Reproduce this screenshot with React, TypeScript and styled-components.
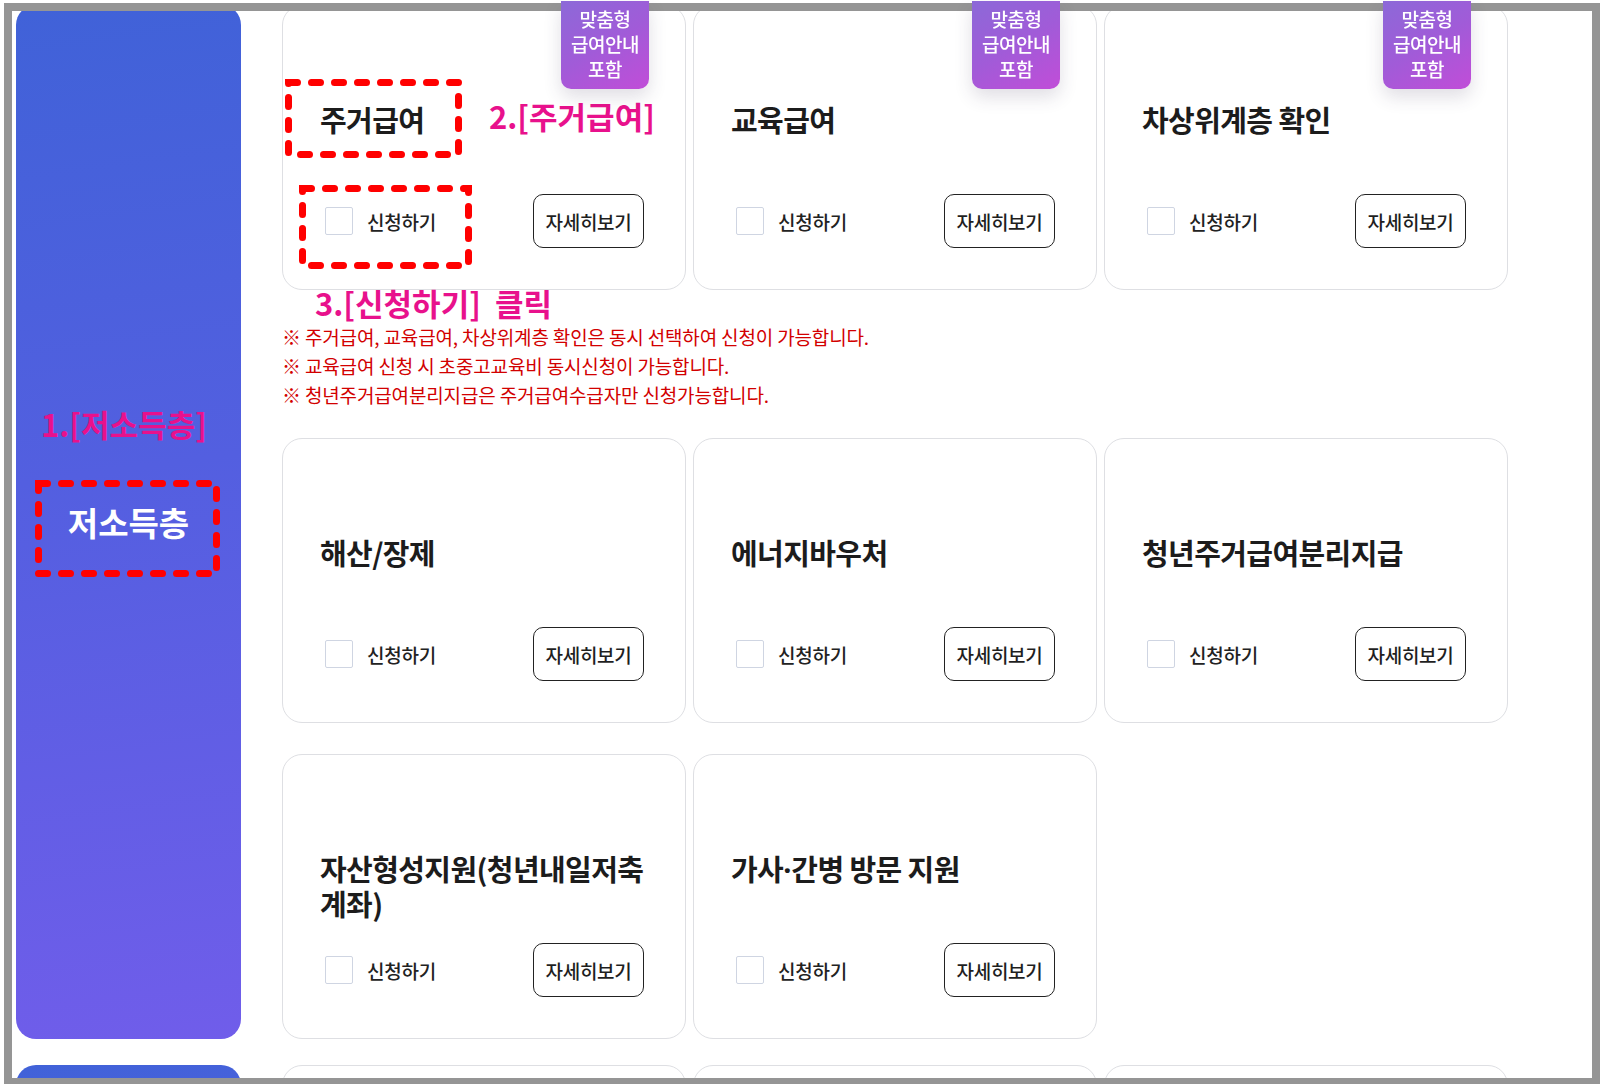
import React from "react";
import styled, { createGlobalStyle } from "styled-components";

const GlobalStyle = createGlobalStyle`
  html, body {
    margin: 0;
    padding: 0;
    background: #ffffff;
    overflow: hidden;
  }
  body {
    font-family: "Noto Sans CJK KR", "Noto Sans", sans-serif;
    color: #1f1f1f;
  }
  * { box-sizing: border-box; }
`;

const Frame = styled.div`
  position: fixed;
  left: 4px;
  top: 3px;
  width: 1596px;
  height: 1083px;
  border: 8px solid #959595;
  pointer-events: none;
  z-index: 50;
`;

const Page = styled.div`
  position: relative;
  padding: 5px 0 0 16px;
  height: 1084px;
  overflow: hidden;
`;

const Section = styled.section`
  display: flex;
  align-items: stretch;
  gap: 41px;
  margin-bottom: 26px;
`;

const Side = styled.div`
  width: 225px;
  flex-shrink: 0;
  border-radius: 20px;
  background: linear-gradient(172deg, #4062d8 0%, #535fe0 45%, #705dea 100%);
  display: flex;
  align-items: center;
  justify-content: center;
  color: #ffffff;
  font-size: 33px;
  font-weight: 700;
  letter-spacing: 0;
`;

const Main = styled.div`
  width: 1226px;
  flex-shrink: 0;
`;

const Grid = styled.div`
  display: grid;
  grid-template-columns: repeat(3, 404px);
  column-gap: 7px;
  row-gap: 31px;
`;

const Card = styled.div`
  position: relative;
  height: 285px;
  border: 1px solid #dedfe3;
  border-radius: 20px;
  background: #ffffff;
  padding: 96px 41px 41px 37px;
  display: flex;
  flex-direction: column;
`;

const Title = styled.h3`
  margin: 0;
  font-size: 29px;
  line-height: 35px;
  font-weight: 700;
  letter-spacing: -0.6px;
  word-break: keep-all;
  color: #1c1c1c;
`;

const Dot = styled.span`
  font-family: "Noto Sans", "DejaVu Sans", sans-serif;
  letter-spacing: 0;
`;

const Footer = styled.div`
  margin-top: auto;
  height: 54px;
  display: flex;
  align-items: center;
  justify-content: space-between;
  padding-left: 5px;
`;

const Check = styled.label`
  display: flex;
  align-items: center;
  gap: 14px;
  font-size: 19px;
  font-weight: 500;
  letter-spacing: -0.2px;
  color: #222222;
  cursor: pointer;
`;

const Box = styled.span`
  width: 28px;
  height: 28px;
  border: 1.5px solid #cfd5e2;
  border-radius: 2px;
  background: #ffffff;
`;

const DetailButton = styled.button`
  width: 111px;
  height: 54px;
  border: 1px solid #222222;
  border-radius: 10px;
  background: #ffffff;
  font-family: inherit;
  font-size: 19px;
  font-weight: 500;
  letter-spacing: -0.3px;
  color: #1f1f1f;
  padding: 0;
  cursor: pointer;
`;

const Badge = styled.div`
  position: absolute;
  top: -5px;
  right: 36px;
  width: 88px;
  padding: 5px 0 8px;
  border-radius: 0 0 10px 10px;
  background: linear-gradient(150deg, #8c69d8 0%, #a15bd8 50%, #c14dd8 100%);
  box-shadow: 0 8px 18px rgba(60, 50, 90, 0.16);
  color: #ffffff;
  font-size: 19px;
  font-weight: 500;
  line-height: 25px;
  letter-spacing: -0.5px;
  text-align: center;
  z-index: 60;
`;

const Notes = styled.ul`
  list-style: none;
  margin: 32px 0 29px;
  padding: 0;
`;

const Note = styled.li`
  font-size: 19px;
  line-height: 29px;
  letter-spacing: -0.15px;
  color: #d20000;
`;

const Annotation = styled.div<{ $x: number; $y: number }>`
  position: absolute;
  left: ${(p) => p.$x}px;
  top: ${(p) => p.$y}px;
  font-size: 31px;
  line-height: 36px;
  font-weight: 700;
  color: #e8118c;
  white-space: pre;
  z-index: 40;
`;

const DashSvg = styled.svg<{ $x: number; $y: number }>`
  position: absolute;
  left: ${(p) => p.$x}px;
  top: ${(p) => p.$y}px;
  overflow: visible;
  z-index: 40;
`;

type DashProps = { x: number; y: number; w: number; h: number };

function DashedBox({ x, y, w, h }: DashProps) {
  return (
    <DashSvg $x={x} $y={y} width={w} height={h} viewBox={`0 0 ${w} ${h}`}>
      <rect
        x={3.5}
        y={3.5}
        width={w - 7}
        height={h - 7}
        fill="none"
        stroke="#ff0000"
        strokeWidth={7}
        strokeDasharray="9 14"
        strokeLinecap="round"
      />
    </DashSvg>
  );
}

type Item = { title: React.ReactNode; badge?: boolean };

const firstRow: Item[] = [
  { title: "주거급여", badge: true },
  { title: "교육급여", badge: true },
  { title: "차상위계층 확인", badge: true },
];

const moreRows: Item[] = [
  { title: "해산/장제" },
  { title: "에너지바우처" },
  { title: "청년주거급여분리지급" },
  { title: "자산형성지원\u2060(\u2060청년내일저축 계좌)" },
  {
    title: (
      <>
        가사<Dot>·</Dot>간병 방문 지원
      </>
    ),
  },
];

function BenefitCard({ item }: { item: Item }) {
  return (
    <Card>
      {item.badge && (
        <Badge>
          맞춤형
          <br />
          급여안내
          <br />
          포함
        </Badge>
      )}
      <Title>{item.title}</Title>
      <Footer>
        <Check>
          <Box />
          신청하기
        </Check>
        <DetailButton>자세히보기</DetailButton>
      </Footer>
    </Card>
  );
}

const BlankCard = styled(Card)``;

export default function App() {
  return (
    <>
      <GlobalStyle />
      <Frame />
      <Page>
        <Section>
          <Side>저소득층</Side>
          <Main>
            <Grid>
              {firstRow.map((it, i) => (
                <BenefitCard key={i} item={it} />
              ))}
            </Grid>
            <Notes>
              <Note>※ 주거급여, 교육급여, 차상위계층 확인은 동시 선택하여 신청이 가능합니다.</Note>
              <Note>※ 교육급여 신청 시 초중고교육비 동시신청이 가능합니다.</Note>
              <Note>※ 청년주거급여분리지급은 주거급여수급자만 신청가능합니다.</Note>
            </Notes>
            <Grid>
              {moreRows.map((it, i) => (
                <BenefitCard key={i} item={it} />
              ))}
            </Grid>
          </Main>
        </Section>
        <Section>
          <Side />
          <Main>
            <Grid>
              <BlankCard />
              <BlankCard />
              <BlankCard />
            </Grid>
          </Main>
        </Section>

        <DashedBox x={285} y={79} w={177} h={79} />
        <DashedBox x={299} y={185} w={173} h={84} />
        <DashedBox x={35} y={480} w={185} h={97} />
        <Annotation $x={489} $y={98}>2.[주거급여]</Annotation>
        <Annotation $x={315} $y={285}>{"3.[신청하기]  클릭"}</Annotation>
        <Annotation $x={41} $y={406}>1.[저소득층]</Annotation>
      </Page>
    </>
  );
}
